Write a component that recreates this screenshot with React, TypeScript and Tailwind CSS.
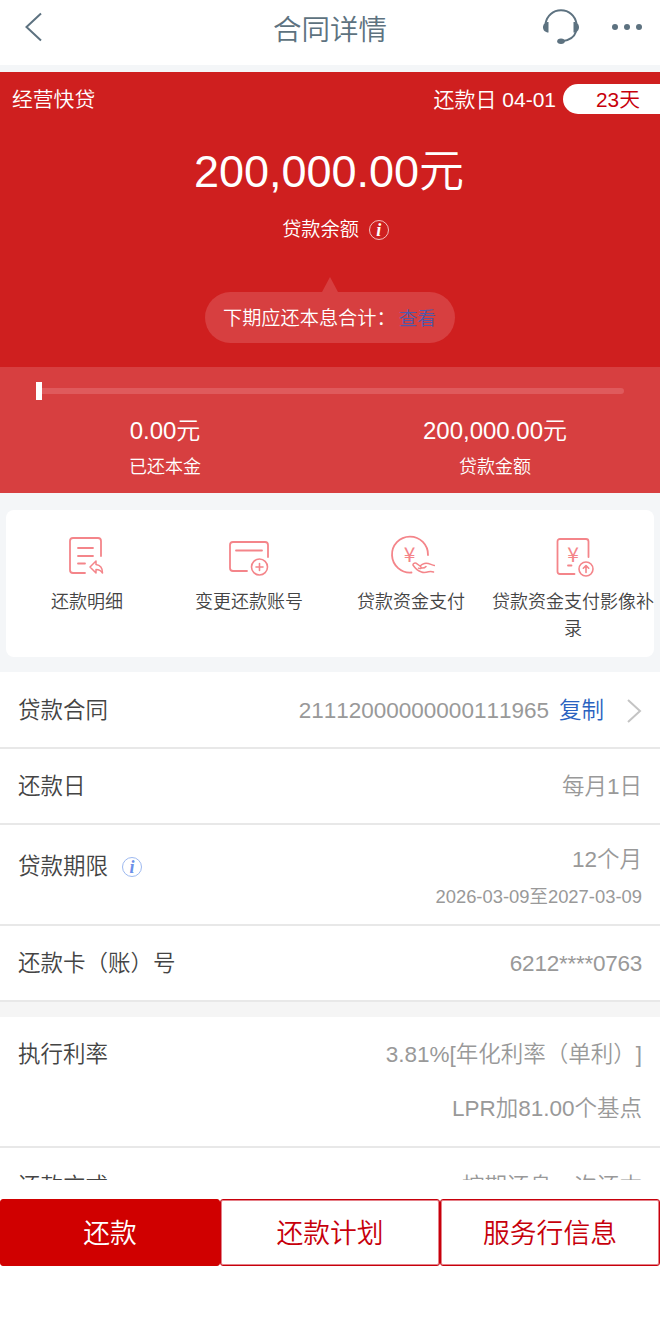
import type { ReactNode } from "react";
import clsx from "clsx";

const TEXT = "font-['Liberation_Sans','Noto_Sans_CJK_SC',sans-serif]";

function HeadsetIcon() {
  return (
    <svg width="38" height="38" viewBox="0 0 38 38" fill="none" stroke="#5d7280" strokeWidth="2">
      <path d="M3.500 15.500C5 7.500 11 2.300 19 2.300s14 5.200 15.500 13.200" />
      <path d="M34.300 23C32.500 28.500 28 32.500 20 33.300" />
      <path d="M6.500 14v10.500C3 24.500 1 22 1 19.200S3 14 6.500 14Z" fill="#5d7280" stroke="none" />
      <path d="M31.500 14v10.500c3.500 0 5.500-2.500 5.500-5.300S35 14 31.500 14Z" fill="#5d7280" stroke="none" />
      <ellipse cx="19" cy="33.300" rx="3.800" ry="2.700" fill="#5d7280" stroke="none" />
    </svg>
  );
}

function InfoIcon({ className }: { className?: string }) {
  return (
    <span
      className={clsx(
        "inline-flex size-5 shrink-0 items-center justify-center rounded-full border font-['Liberation_Serif',serif] text-[18px] leading-none font-bold italic",
        className,
      )}
    >
      i
    </span>
  );
}

function IconFrame({ children }: { children: ReactNode }) {
  return (
    <svg
      width="48"
      height="44"
      viewBox="0 0 48 44"
      fill="none"
      stroke="#f4858a"
      strokeWidth="1.800"
      strokeLinecap="round"
      strokeLinejoin="round"
    >
      {children}
    </svg>
  );
}

function Yen({ x }: { x: number }) {
  return (
    <text
      x={x}
      y="27.500"
      textAnchor="middle"
      fontSize="21"
      fill="#f4858a"
      stroke="none"
      className="font-['Noto_Sans_CJK_SC',sans-serif] font-normal"
    >
      ¥
    </text>
  );
}

const ACTIONS = [
  {
    label: "还款明细",
    icon: (
      <IconFrame>
        <path d="M38 22V7a3 3 0 0 0-3-3H10a3 3 0 0 0-3 3v29a3 3 0 0 0 3 3h12" />
        <path d="M15 14h15M15 22h15M15 29.500h7" />
        <path d="M33 27v3.500c4.500.5 6.500 3.500 6.500 8.500-1.500-2.500-3.500-3.500-6.500-3.500V39l-6-6 6-6Z" strokeWidth="1.500" />
      </IconFrame>
    ),
  },
  {
    label: "变更还款账号",
    icon: (
      <IconFrame>
        <path d="M43 23V11a3 3 0 0 0-3-3H8a3 3 0 0 0-3 3v23a3 3 0 0 0 3 3h14M11 16.500h26" />
        <circle cx="34.500" cy="33" r="8" strokeWidth="1.600" />
        <path d="M31 33h7M34.500 29.500v7" strokeWidth="1.600" />
      </IconFrame>
    ),
  },
  {
    label: "贷款资金支付",
    icon: (
      <IconFrame>
        <path d="M41 21A18 18 0 1 0 24.500 38.500" />
        <Yen x={22.5} />
        <path
          d="M47.500 31.500c-3.500-.5-6-3-10-2-2 .5-3 1.200-4.500 2.500l-4-2.800c-1.500-.8-3.700.8-2.700 2.300 2 3 5 5.500 8.200 6.500 2.500 1 4.500.5 7-.2 2-.5 3.500-.3 5 .2M33 32l1 1c.5 1.500-1 2-2.500 1.200M34 34c2 .3 4-.3 5-1.500"
          strokeWidth="1.500"
        />
      </IconFrame>
    ),
  },
  {
    label: "贷款资金支付影像补录",
    icon: (
      <IconFrame>
        <path d="M39.500 23V7.500A2.500 2.500 0 0 0 37 5H11a2.500 2.500 0 0 0-2.500 2.500v30A2.500 2.500 0 0 0 11 40h14.500M19 31.500h3.500" />
        <Yen x={24} />
        <circle cx="37" cy="35" r="7" strokeWidth="1.600" />
        <path d="M37 38.500V32M34.300 34.200l2.700-2.700 2.700 2.700" strokeWidth="1.600" />
      </IconFrame>
    ),
  },
];

function Row({ label, className, children }: { label: ReactNode; className?: string; children: ReactNode }) {
  return (
    <div className={clsx("flex items-center justify-between border-b-2 border-[#e8e8e8] px-[18px]", className)}>
      <div className="flex items-center text-[#444]">{label}</div>
      <div className="flex items-center text-[#999]">{children}</div>
    </div>
  );
}

export default function App() {
  return (
    <div
      className={clsx(
        TEXT,
        "flex h-[1343px] w-[660px] flex-col overflow-hidden bg-white font-[350] [font-kerning:none] [text-spacing-trim:space-all]",
      )}
    >
      <header className="grid h-[65px] shrink-0 grid-cols-3 pb-[11px] text-[#5d7280]">
        <div className="flex items-center pl-6">
          <svg width="18" height="30" viewBox="0 0 18 30" fill="none" stroke="#5d7280" strokeWidth="2">
            <path d="M17 1.500 2.500 15 17 28.500" />
          </svg>
        </div>
        <h1 className="flex items-center justify-center pt-1.5 text-[28.5px] font-[350]">合同详情</h1>
        <div className="flex items-center justify-end gap-8 pr-[18px]">
          <HeadsetIcon />
          <div className="flex gap-1.5">
            <i className="size-1.5 rounded-full bg-[#5d7280]" />
            <i className="size-1.5 rounded-full bg-[#5d7280]" />
            <i className="size-1.5 rounded-full bg-[#5d7280]" />
          </div>
        </div>
      </header>

      <main className="h-[1115px] shrink-0 overflow-hidden bg-[#f4f6f8] pt-[7px]">
        {/* Balance */}
        <section className="flex h-[295px] flex-col items-center bg-[#cf1f1f] text-white">
          <div className="flex h-[54px] w-full items-center justify-between pl-3 text-[20.8px]">
            <span className="pt-0.5">经营快贷</span>
            <div className="flex items-center gap-[7px]">
              <span className="pt-px text-[21px]">还款日 04-01</span>
              <span className="flex h-[30px] w-[97px] items-center rounded-l-full bg-white pt-px pl-[33px] text-[#c7000b]">
                23天
              </span>
            </div>
          </div>
          <div className="mt-[13px] h-[64px] pr-[2px] text-[45px] leading-[66px]">200,000.00元</div>
          <div className="mt-[12px] flex h-[30px] items-center gap-[10px] pl-[11px] text-[19.2px]">
            贷款余额
            <InfoIcon className="border-white/70" />
          </div>
          <svg className="mt-[32px] shrink-0" width="16" height="15" viewBox="0 0 16 15">
            <path d="M8 0 16 15H0Z" fill="#d73f40" />
          </svg>
          <div className="flex h-[51px] w-[250px] items-center rounded-full bg-[#d73f40] pt-[4px] pl-[18px] text-[19.2px]">
            下期应还本息合计：
            <a className="ml-[3px] text-[18.7px] text-[#5058a8]">查看</a>
          </div>
        </section>

        {/* Repayment progress */}
        <section className="h-[126px] bg-[#d73f40] px-9 pt-[15px] text-center text-white">
          <div className="flex h-[18px] items-center">
            <div className="h-[18px] w-1.5 bg-white" />
            <div className="h-1.5 flex-1 rounded-r-full bg-[#df5a5c]" />
          </div>
          <div className="-mx-9 grid grid-cols-2">
            <div>
              <div className="mt-3 h-[37px] text-[24px] leading-[37px]">0.00元</div>
              <div className="h-9 text-[18px] leading-9">已还本金</div>
            </div>
            <div>
              <div className="mt-3 h-[37px] text-[24px] leading-[37px]">200,000.00元</div>
              <div className="h-9 text-[18px] leading-9">贷款金额</div>
            </div>
          </div>
        </section>

        <section className="mx-1.5 mt-[17px] mb-[15px] grid h-[147px] grid-cols-4 rounded-lg bg-white pt-6">
          {ACTIONS.map((action) => (
            <div key={action.label} className="flex flex-col items-center">
              {action.icon}
              <div className="mt-[11px] w-[162px] text-center text-[18px] leading-[27px] text-[#444]">{action.label}</div>
            </div>
          ))}
        </section>

        {/* Contract details */}
        <div className="bg-[#f5f5f5] text-[22.5px]">
          <section className="bg-white">
            <Row className="h-[77px] pt-0.5" label="贷款合同">
              <span>21112000000000111965</span>
              <a className="ml-[10px] text-[#2a62c0]">复制</a>
              <svg className="ml-[22px]" width="16" height="26" viewBox="0 0 16 26" fill="none" stroke="#c4c4c4" strokeWidth="2">
                <path d="M2 2l12 11L2 24" />
              </svg>
            </Row>
            <Row className="h-[76px] pt-0.5" label="还款日">
              每月1日
            </Row>
            <Row
              className="h-[101px]"
              label={
                <div className="flex items-center gap-[14px] pb-[16px]">
                  贷款期限
                  <InfoIcon className="border-[#9db9f0] text-[#6b8fe8]" />
                </div>
              }
            >
              <div className="flex flex-col pt-[7px] text-right">
                <span className="h-[38px] leading-[38px]">12个月</span>
                <span className="h-[36px] text-[18.4px] leading-[36px]">2026-03-09至2027-03-09</span>
              </div>
            </Row>
            <Row className="h-[76px] pt-px" label="还款卡（账）号">
              <span className="tracking-[-0.25px]">6212****0763</span>
            </Row>
          </section>
          <section className="mt-[15px] bg-white">
            <Row className="h-[131px] items-start! pt-[11px] leading-[54px]" label="执行利率">
              <div className="text-right">
                <div>3.81%[年化利率（单利）]</div>
                <div>LPR加81.00个基点</div>
              </div>
            </Row>
            <Row className="h-[77px] pt-0.5" label="还款方式">
              按期还息一次还本
            </Row>
          </section>
        </div>
      </main>

      <footer className="mt-[19px] grid h-[67px] shrink-0 grid-cols-3 text-[26.8px]">
        <button className="rounded-[3px] border border-[#d00000] bg-[#d00000] pt-[3px] text-white">还款</button>
        <button className="rounded-[3px] border border-[#c7000b] pt-[3px] text-[#c7000b] shadow-[inset_0_0_0_1px_#e58088]">
          还款计划
        </button>
        <button className="rounded-[3px] border border-[#c7000b] pt-[3px] text-[#c7000b] shadow-[inset_0_0_0_1px_#e58088]">
          服务行信息
        </button>
      </footer>
    </div>
  );
}
